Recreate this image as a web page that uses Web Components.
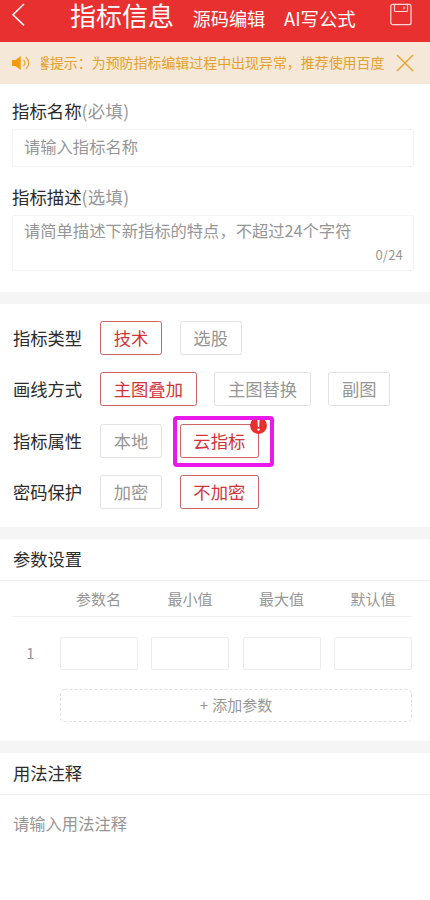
<!DOCTYPE html>
<html lang="zh-CN">
<head>
<meta charset="utf-8">
<title>指标信息</title>
<style>
html,body{margin:0;background:#fff}
body{width:430px;height:900px;overflow:hidden;font-family:"Noto Sans CJK SC",sans-serif;color:#2c2c2c}
</style>
</head>
<body>
<indicator-page></indicator-page>
<script>
function define(name, html) {
  const t = document.createElement('template');
  t.innerHTML = html;
  customElements.define(name, class extends HTMLElement {
    constructor() {
      super();
      this.attachShadow({mode: 'open'}).appendChild(t.content.cloneNode(true));
    }
  });
}

define('top-bar', `<style>
:host{display:flex;height:42px;background:#e93031;color:#fff;box-sizing:border-box;align-items:flex-start;white-space:nowrap}
.back{margin:3px 0 0 11px;width:15px;height:24px}
h1{margin:0 0 0 44px;width:104px;font-size:26px;font-weight:400;line-height:38px;height:38px;margin-top:-4px}
.a{font-size:18.2px;line-height:36px;margin-left:18.5px;width:73px}
.a+.a{font-size:18.4px}
.save{margin:3px 18px 0 auto}
svg{display:block;fill:none;stroke:#fff}
</style>
<svg class="back" viewBox="0 0 15 24" stroke-width="1.5"><path d="M13 1 2 11.7 13 22.4"/></svg>
<h1>指标信息</h1><span class="a">源码编辑</span><span class="a">AI写公式</span>
<svg class="save" width="22" height="23" viewBox="0 0 22 23" stroke-width="1.2" style="stroke:#ffd9d9"><rect x=".8" y="1.3" width="20.2" height="20.4" rx="2"/><path d="M4.5 1.5V7.5q0 1 1 1h11q1 0 1-1V1.5M14 3.5v2.8"/></svg>`);

define('notice-bar', `<style>
:host{display:flex;height:42px;background:#f5e8d8;color:#e4a12c;align-items:center}
svg{display:block;fill:none;stroke:#e9a52b}
.s{margin-left:12px;width:19px}
.t{margin:-2px 0 0 10px;width:344px;overflow:hidden;display:flex;font-size:13.95px;line-height:22px;white-space:nowrap}
.t span{margin-left:-5px}
.x{margin-left:11px}
</style>
<svg class="s" width="19" height="16" viewBox="0 0 19 16"><path d="M0 5h3.5L8.7 1v14L3.5 11H0z" fill="#f59a0c" stroke="none"/><path d="M11.5 5q3 3 0 6M13.8 2q6 6 0 12" stroke-width="1.1"/></svg>
<div class="t"><span>馨提示：为预防指标编辑过程中出现异常，推荐使用百度</span></div>
<svg class="x" width="18" height="18" viewBox="0 0 18 18" stroke-width="1.4"><path d="M1 1 17 17M17 1 1 17"/></svg>`);

define('form-field', `<style>
:host{display:block;padding:0 16px 0 12px}
.l{font-size:17.4px;line-height:26px;height:26px;color:#2c2c2c;white-space:nowrap}
.l ::slotted(i){font-style:normal;color:#969696;letter-spacing:.3px}
.b{margin-top:5px;height:var(--h);box-sizing:border-box;border:1px solid #f4f4f4;border-radius:2px;padding:var(--p) 10px 0 11px;font-size:16.3px;line-height:24px;color:#969696;display:flex;flex-direction:column;white-space:nowrap}
.c{align-self:flex-end;font-size:13px;line-height:18px;margin-top:4px;letter-spacing:.2px}
</style>
<div class="l"><slot name="label"></slot><slot name="hint"></slot></div>
<div class="b"><slot></slot><div class="c"><slot name="count"></slot></div></div>`);

define('option-row', `<style>
:host{display:flex;height:34px;padding-left:13px;align-items:center;white-space:nowrap}
.l{width:87px;font-size:17.3px;line-height:26px}
.o{display:flex;gap:17.4px}
</style><span class="l"><slot name="label"></slot></span><div class="o"><slot></slot></div>`);

define('option-chip', `<style>
:host{display:block;position:relative;box-sizing:border-box;height:34px;border:1px solid #e2e2e2;border-radius:2.5px;padding:0 12.8px;font-size:17.3px;line-height:32px;color:#969696}
:host([active]){border-color:#d06262;color:#d23439}
::slotted(alert-badge){position:absolute;right:-9px;top:-8px}
</style><slot></slot>`);

define('alert-badge', `<style>:host{display:block;width:17px;height:17px}svg{display:block}</style>
<svg width="17" height="17" viewBox="0 0 17 17"><circle cx="8.5" cy="8.5" r="8.4" fill="#e7302f"/><path d="M7.4 3h2.2l-.5 7H7.9z" fill="#fff"/><circle cx="8.5" cy="12.6" r="1.2" fill="#fff"/></svg>`);

define('highlight-frame', `<style>:host{display:block;position:absolute;left:173px;top:416px;width:101px;height:51px;box-sizing:border-box;border:4px solid #eb18ec;border-radius:4px}</style>`);

define('section-gap', `<style>:host{display:block;height:12px;background:#f5f5f5}</style>`);

define('section-title', `<style>
:host{display:block;box-sizing:border-box;height:42px;border-bottom:1px solid #f0f0f0;padding-left:13px;font-size:17.3px;line-height:39px}
</style><slot></slot>`);

define('param-table', `<style>
:host{display:block;padding:0 18px 0 12px;color:#969696;font-size:15px}
.r{display:grid;grid-template-columns:34px repeat(4,78px);column-gap:13.5px}
.h{height:36px;box-sizing:border-box;border-bottom:1px solid #f1f1f1;line-height:36px;text-align:center}
.v{margin-top:20px;line-height:31px;height:33px}
.n{text-align:center;padding-left:3px}
.i{border:1px solid #ececec;border-radius:2px}
.add{position:relative;margin:19px 0 0 48px;height:33px;box-sizing:border-box;width:352px;line-height:32px;text-align:center;word-spacing:1px}
.add svg{position:absolute;inset:0}
</style>
<div class="r h"><span></span><span>参数名</span><span>最小值</span><span>最大值</span><span>默认值</span></div>
<div class="r v"><span class="n">1</span><div class="i"></div><div class="i"></div><div class="i"></div><div class="i"></div></div>
<div class="add"><svg width="352" height="33"><rect x=".5" y=".5" width="351" height="32" rx="4" fill="none" stroke="#dedede" stroke-dasharray="3 2"/></svg>+ 添加参数</div>`);

define('indicator-page', `<style>
:host{display:block;position:relative;width:430px;height:900px;overflow:hidden;background:#fff}
.f{height:208px;box-sizing:border-box;padding-top:14px}
.f form-field+form-field{margin-top:17px}
.o{height:223px;box-sizing:border-box;padding-top:17px;display:flex;flex-direction:column;gap:17.3px}
.p{height:160px}
.note{padding:15px 13px;font-size:16.3px;line-height:26px;color:#969696}
</style>
<top-bar></top-bar><notice-bar></notice-bar>
<div class="f">
<form-field style="--h:38px;--p:4px"><span slot="label">指标名称</span><i slot="hint">(必填)</i><span>请输入指标名称</span></form-field>
<form-field style="--h:56px;--p:2px"><span slot="label">指标描述</span><i slot="hint">(选填)</i><span>请简单描述下新指标的特点，不超过24个字符</span><span slot="count">0/24</span></form-field>
</div>
<section-gap></section-gap>
<div class="o">
<option-row><span slot="label">指标类型</span><option-chip active>技术</option-chip><option-chip>选股</option-chip></option-row>
<option-row><span slot="label">画线方式</span><option-chip active>主图叠加</option-chip><option-chip>主图替换</option-chip><option-chip>副图</option-chip></option-row>
<option-row><span slot="label">指标属性</span><option-chip>本地</option-chip><option-chip active>云指标<alert-badge></alert-badge></option-chip></option-row>
<option-row><span slot="label">密码保护</span><option-chip>加密</option-chip><option-chip active>不加密</option-chip></option-row>
</div>
<section-gap></section-gap>
<section-title>参数设置</section-title>
<param-table class="p"></param-table>
<section-gap></section-gap>
<section-title>用法注释</section-title>
<div class="note">请输入用法注释</div>
<highlight-frame></highlight-frame>`);
</script>
</body>
</html>
